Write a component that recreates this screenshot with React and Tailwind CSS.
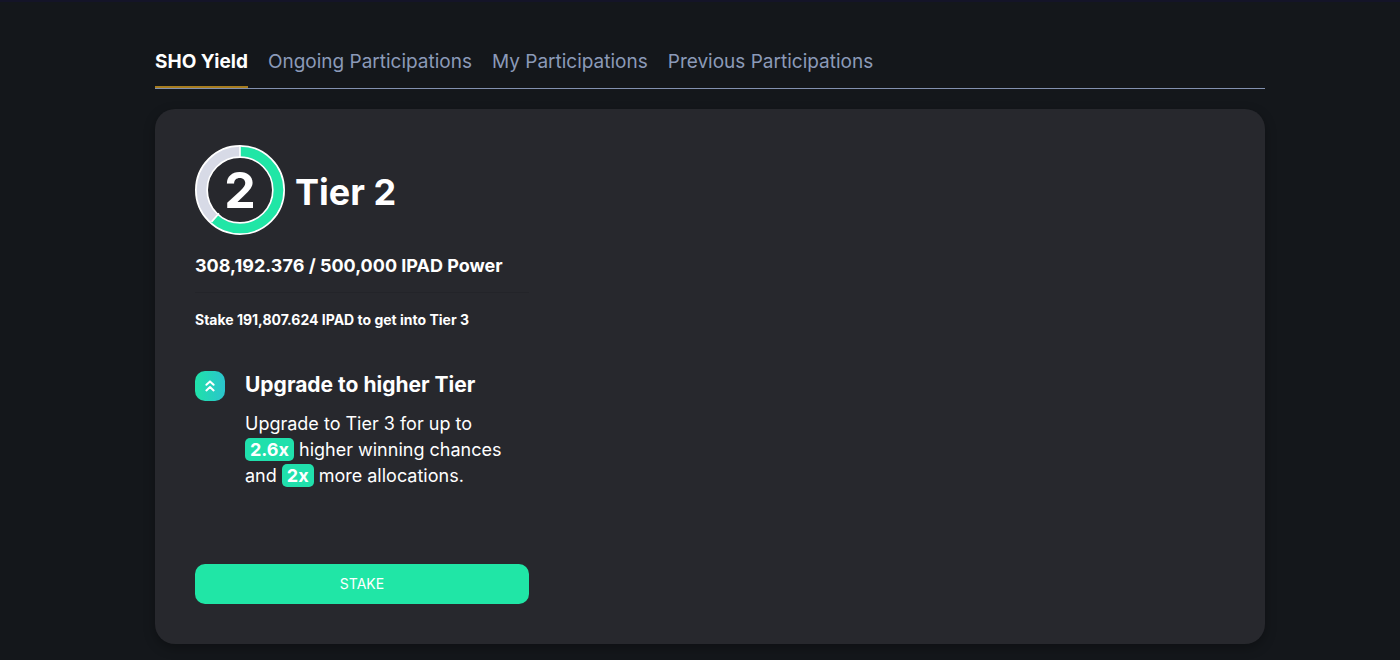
import React, { useState } from 'react';

const tabs = ['SHO Yield', 'Ongoing Participations', 'My Participations', 'Previous Participations'];

function Tabs({ active, onChange }) {
  return (
    <nav className="flex gap-5 border-b border-[#8391b0] text-[19px] leading-6">
      {tabs.map((tab) => (
        <button
          key={tab}
          type="button"
          onClick={() => onChange(tab)}
          className={
            tab === active
              ? 'border-b-2 border-[#a67c1f] pb-3 font-bold text-white'
              : 'border-b-2 border-transparent pb-3 text-[#8b9ab8]'
          }
        >
          {tab}
        </button>
      ))}
    </nav>
  );
}

function TierRing({ tier }) {
  return (
    <svg viewBox="0 0 90 90" className="size-[90px] shrink-0" role="img" aria-label={`Tier ${tier}`}>
      <circle cx="45" cy="45" r="38.5" fill="none" stroke="#fff" strokeWidth="13" />
      <circle cx="45" cy="45" r="38.5" fill="none" stroke="#d7dae6" strokeWidth="9.6" />
      <circle
        cx="45"
        cy="45"
        r="38.5"
        fill="none"
        stroke="#20e6a6"
        strokeWidth="9.6"
        pathLength="100"
        strokeDasharray="61.6 100"
        transform="rotate(-90 45 45)"
      />
      <path d="M45 1v12M24 68.4l-7.5 8.5" stroke="#fff" strokeWidth="1.6" />
      <text x="45" y="63" textAnchor="middle" fontSize="50" fontWeight="700" fill="#fff">
        {tier}
      </text>
    </svg>
  );
}

function Highlight({ children }) {
  return <strong className="rounded-[5px] bg-[#20e0ac] px-[5px] py-px font-bold">{children}</strong>;
}

function UpgradeInfo() {
  return (
    <div className="flex gap-5">
      <div className="flex size-[30px] shrink-0 items-center justify-center rounded-[10px] bg-linear-to-r from-[#20e2a8] to-[#2bc4cc]">
        <svg viewBox="0 0 10 12" className="h-3 w-2.5" fill="none" stroke="#fff" strokeWidth="2" strokeLinecap="round" strokeLinejoin="round">
          <path d="M1.4 4.8 5 1.4l3.6 3.4M1.4 10.4 5 7l3.6 3.4" />
        </svg>
      </div>
      <div>
        <h3 className="text-[21px] leading-7 font-bold">Upgrade to higher Tier</h3>
        <p className="mt-3 text-lg leading-[26px]">
          Upgrade to Tier 3 for up to
          <br />
          <Highlight>2.6x</Highlight> higher winning chances
          <br />
          and <Highlight>2x</Highlight> more allocations.
        </p>
      </div>
    </div>
  );
}

export default function App() {
  const [active, setActive] = useState(tabs[0]);

  return (
    <div className="min-h-screen border-t-2 border-[#141428] bg-[#14171b] pt-12 pr-6 pb-4 pl-11 font-['Inter',sans-serif] text-white">
      <main className="mx-auto max-w-[1110px]">
        <Tabs active={active} onChange={setActive} />
        <section className="mt-5 grid grid-cols-3 gap-3.5 rounded-[20px] bg-[#27282d] px-10 pt-9 pb-10 shadow-[0_4px_12px_rgba(0,0,0,0.3)]">
          <div>
            <div className="flex items-center gap-2.5">
              <TierRing tier={2} />
              <h1 className="pt-1 text-4xl font-bold">Tier 2</h1>
            </div>
            <p className="mt-[17px] text-lg leading-7 font-bold">308,192.376 / 500,000 IPAD Power</p>
            <hr className="mt-3 border-[#232429]" />
            <p className="mt-[15px] text-sm leading-6 font-bold">Stake 191,807.624 IPAD to get into Tier 3</p>
            <div className="mt-[39px]">
              <UpgradeInfo />
            </div>
            <button type="button" className="mt-[75px] h-10 w-full rounded-[10px] bg-[#20e6a6] text-sm">
              STAKE
            </button>
          </div>
        </section>
      </main>
    </div>
  );
}
